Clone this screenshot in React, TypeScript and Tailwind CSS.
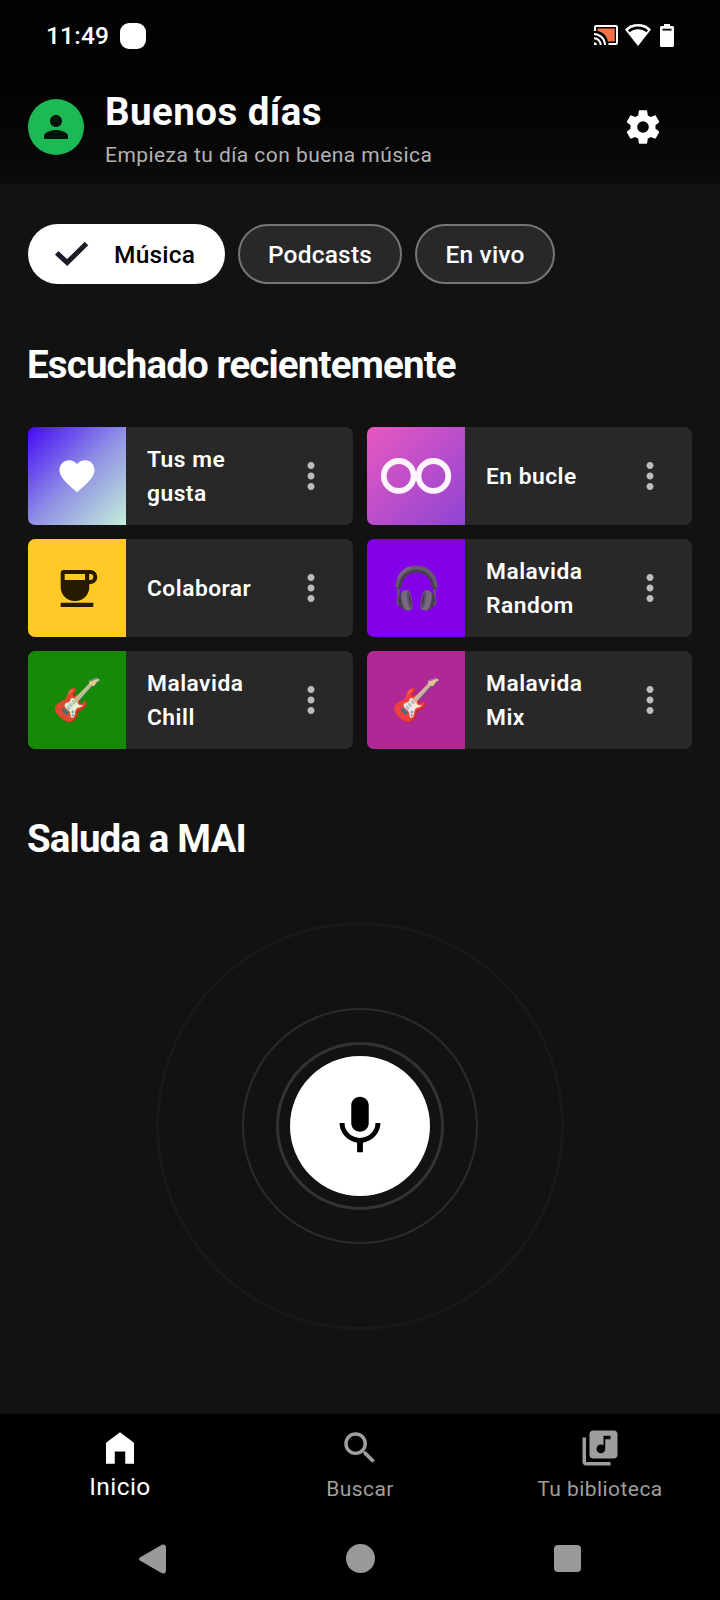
import type { ReactNode } from "react";
import {
  MdFavorite,
  MdLibraryMusic,
  MdMic,
  MdMoreVert,
  MdPerson,
  MdSearch,
} from "react-icons/md";

type Mix = {
  title: string;
  cover: string;
  art: ReactNode;
};

const mixes: Mix[] = [
  {
    title: "Tus me gusta",
    cover: "bg-[linear-gradient(135deg,#450af5,#8e8ee5_50%,#c4efd9)]",
    art: <MdFavorite className="size-[42px] text-white" />,
  },
  {
    title: "En bucle",
    cover: "bg-[linear-gradient(135deg,#e858c0,#8e44d4)]",
    art: <LoopArt />,
  },
  { title: "Colaborar", cover: "bg-[#ffca28]", art: <CupArt /> },
  {
    title: "Malavida Random",
    cover: "bg-[#8400e7]",
    art: <EmojiArt emoji="🎧" />,
  },
  {
    title: "Malavida Chill",
    cover: "bg-[#168a08]",
    art: <EmojiArt emoji="🎸" />,
  },
  {
    title: "Malavida Mix",
    cover: "bg-[#af2896]",
    art: <EmojiArt emoji="🎸" />,
  },
];

export default function App() {
  return (
    <div className="flex h-[1600px] w-[720px] flex-col overflow-hidden bg-[#121212] font-['Roboto',sans-serif] text-white">
      <header className="h-[184px] shrink-0 bg-linear-to-b from-[#030303] from-50% to-[#0b0b0b]">
        <StatusBar />
        <div className="flex h-[114px] items-center pr-[57px] pl-7">
          <div className="flex size-14 items-center justify-center rounded-full bg-[#1db954]">
            <MdPerson className="size-9 text-[#04140a]" />
          </div>
          <div className="ml-[21px] flex-1 pt-1">
            <h1 className="mt-[2px] text-[38.5px] leading-[48px] font-bold tracking-[0.45px]">
              Buenos días
            </h1>
            <p className="mt-[2px] text-[21px] leading-[34px] tracking-[0.44px] text-[#b3b3b3]">
              Empieza tu día con buena música
            </p>
          </div>
          <svg className="size-10" viewBox="0 0 24 24" fill="currentColor">
            <path d="M12 15.5A3.5 3.5 0 0 1 8.5 12 3.5 3.5 0 0 1 12 8.5a3.5 3.5 0 0 1 3.5 3.5 3.5 3.5 0 0 1-3.5 3.5m7.43-2.53c.04-.32.07-.64.07-.97 0-.33-.03-.66-.07-1l2.11-1.63c.19-.15.24-.42.12-.64l-2-3.46c-.12-.22-.39-.31-.61-.22l-2.49 1c-.52-.39-1.06-.73-1.69-.98l-.37-2.65A.506.506 0 0 0 14 2h-4c-.25 0-.46.18-.5.42l-.37 2.65c-.63.25-1.17.59-1.69.98l-2.49-1c-.22-.09-.49 0-.61.22l-2 3.46c-.13.22-.07.49.12.64L4.57 11c-.04.34-.07.67-.07 1 0 .33.03.65.07.97l-2.11 1.66c-.19.15-.25.42-.12.64l2 3.46c.12.22.39.3.61.22l2.49-1.01c.52.4 1.06.74 1.69.99l.37 2.65c.04.24.25.42.5.42h4c.25 0 .46-.18.5-.42l.37-2.65c.63-.26 1.17-.59 1.69-.99l2.49 1.01c.22.08.49 0 .61-.22l2-3.46c.12-.22.07-.49-.12-.64z" />
          </svg>
        </div>
      </header>

      <main className="flex-1 px-7">
        {/* Filters */}
        <div className="mt-10 flex gap-[13px]">
          <div className="flex h-[60px] w-[197px] items-center rounded-full bg-white pl-[26px] text-[24.5px] font-medium tracking-[0.2px] text-black">
            <svg className="h-7 w-9" viewBox="0 0 36 28" fill="none">
              <path
                d="M2.7 12.8 13.2 22.6 32.5 3.4"
                stroke="#1d1b26"
                strokeWidth="5"
              />
            </svg>
            <span className="mt-[2px] ml-6">Música</span>
          </div>
          <Chip className="w-[164px]" label="Podcasts" />
          <Chip className="w-[140px]" label="En vivo" />
        </div>

        <SectionTitle className="mt-[57px]">Escuchado recientemente</SectionTitle>

        <div className="mt-[38px] grid grid-cols-2 gap-[14px]">
          {mixes.map((m) => (
            <div
              key={m.title}
              className="flex h-[98px] items-center overflow-hidden rounded-[7px] bg-[#282828]"
            >
              <div
                className={`flex size-[98px] shrink-0 items-center justify-center ${m.cover}`}
              >
                {m.art}
              </div>
              <span className="mt-[2px] ml-[21px] w-[120px] flex-1 text-[22.75px] leading-[34px] font-semibold tracking-[0.5px]">
                {m.title}
              </span>
              <MdMoreVert className="mr-[21px] ml-5 size-[42px] shrink-0 text-[#bdbdbd]" />
            </div>
          ))}
        </div>

        <SectionTitle className="mt-[66px]">Saluda a MAI</SectionTitle>

        {/* Voice assistant button and its pulse rings */}
        <div className="mt-[59px] flex justify-center">
          <div className="flex size-[408px] items-center justify-center rounded-full border-3 border-[#191919]">
            <div className="flex size-[236px] items-center justify-center rounded-full border-2 border-[#2b2b2b]">
              <div className="flex size-[168px] items-center justify-center rounded-full border-3 border-[#333]">
                <div className="flex size-[140px] items-center justify-center rounded-full bg-white">
                  <MdMic className="size-[70px] text-black" />
                </div>
              </div>
            </div>
          </div>
        </div>
      </main>

      <footer className="h-[186px] shrink-0 bg-black">
        <nav className="grid h-[100px] grid-cols-3 text-[#9e9e9e]">
          <Tab
            icon={
              <svg className="size-[42px]" viewBox="0 0 24 24" fill="currentColor">
                <path d="M12 3 4 9v12h5v-7h6v7h5V9z" />
              </svg>
            }
            label="Inicio"
            active
          />
          <Tab icon={<MdSearch className="size-[42px]" />} label="Buscar" />
          <Tab
            icon={<MdLibraryMusic className="size-[42px]" />}
            label="Tu biblioteca"
          />
        </nav>
        <SystemNav />
      </footer>
    </div>
  );
}

function StatusBar() {
  return (
    <div className="flex h-[70px] items-center pr-[46px] pl-[46px]">
      <span className="mt-[2px] text-[24.5px] leading-[68px] font-medium tracking-[0.2px]">
        11:49
      </span>
      <span className="mt-px ml-[11px] size-[26px] rounded-[9px] bg-white" />
      <svg className="ml-auto h-5 w-6" viewBox="0 0 24 20" fill="none">
        <path
          d="M1 6V2.2C1 1.5 1.5 1 2.2 1h19.6c.7 0 1.2.5 1.2 1.2v15.6c0 .7-.5 1.2-1.2 1.2H14.5"
          stroke="#fff"
          strokeWidth="2"
        />
        <path d="M3.5 3.5h17.2v13H14C13 11 9 7 3.5 6z" fill="#f4724a" />
        <path d="M0 17.2A2.8 2.8 0 0 1 2.8 20H0z" fill="#fff" />
        <path
          d="M0 13.3A6.7 6.7 0 0 1 6.7 20M0 9A11 11 0 0 1 11 20"
          stroke="#fff"
          strokeWidth="1.9"
        />
      </svg>
      <svg className="ml-[7px] h-[22px] w-[26px]" viewBox="0 0 26 22">
        <path d="M13 22 0 5.5C7-1.8 19-1.8 26 5.5z" fill="#fff" />
        <path
          d="M3.8 7.3C9 2.7 17 2.7 22.2 7.3"
          stroke="#000"
          strokeWidth="2.6"
          fill="none"
        />
      </svg>
      <svg className="ml-[9px] h-[23px] w-[14px]" viewBox="0 0 14 23">
        <path
          d="M4 0h6v2h2.5c.8 0 1.5.7 1.5 1.5v18c0 .8-.7 1.5-1.5 1.5h-11C.7 23 0 22.3 0 21.5v-18C0 2.7.7 2 1.5 2H4z"
          fill="#fff"
        />
        <path d="M2.5 4.7h9v1.9h-9z" fill="#111" />
      </svg>
    </div>
  );
}

function Chip({ label, className }: { label: string; className: string }) {
  return (
    <div
      className={`flex h-[60px] items-center justify-center rounded-full border-2 border-[#76757a] bg-[#282828] pt-[2px] text-[24.5px] font-medium tracking-[0.2px] ${className}`}
    >
      {label}
    </div>
  );
}

function SectionTitle({
  children,
  className,
}: {
  children: ReactNode;
  className: string;
}) {
  return (
    <h2
      className={`-ml-px text-[38.5px] leading-[48px] font-bold tracking-[-0.87px] ${className}`}
    >
      {children}
    </h2>
  );
}

function Tab({
  icon,
  label,
  active,
}: {
  icon: ReactNode;
  label: string;
  active?: boolean;
}) {
  return (
    <div
      className={`flex flex-col items-center pt-[13px] ${active ? "text-white" : ""}`}
    >
      {icon}
      <span
        className={
          active
            ? "mt-px text-[24.5px] leading-[34px] tracking-[0.45px]"
            : "mt-[3px] text-[21px] leading-[34px] tracking-[0.44px]"
        }
      >
        {label}
      </span>
    </div>
  );
}

// Android back / home / recents
function SystemNav() {
  return (
    <div className="flex h-[89px] items-center justify-between pr-[139px] pl-[139px] text-[#999]">
      <svg className="h-[30px] w-[27px]" viewBox="0 0 27 30" fill="currentColor">
        <path d="M1.2 13.2 22.5.9C24.8-.3 27 .8 27 3.5v23c0 2.7-2.2 3.8-4.5 2.6L1.2 16.8c-1.6-.9-1.6-2.7 0-3.6z" />
      </svg>
      <span className="size-[29px] rounded-full bg-current" />
      <span className="size-[27px] rounded-[4px] bg-current" />
    </div>
  );
}

function EmojiArt({ emoji }: { emoji: string }) {
  return (
    <span className="mt-px text-[41px] leading-none opacity-90">{emoji}</span>
  );
}

function LoopArt() {
  return (
    <svg className="size-[98px]" viewBox="0 0 98 98" fill="none">
      <g stroke="#fff3fd" strokeWidth="5.8">
        <circle cx="31.7" cy="48.9" r="14.9" />
        <circle cx="66.4" cy="48.9" r="14.9" />
      </g>
    </svg>
  );
}

function CupArt() {
  return (
    <svg className="size-[98px]" viewBox="0 0 98 98" fill="#261a00">
      <path
        fillRule="evenodd"
        d="M35.7 31H62.3a7 7 0 0 1 0 14H61.3v3a14 14 0 0 1-14 14h-.6a14 14 0 0 1-14-14V34a3 3 0 0 1 3-3zM36.7 35v6H57v-6zM61.2 35v6h1.1a3 3 0 0 0 0-6z"
      />
      <path d="M32.7 63.7h32.6V68H32.7z" />
    </svg>
  );
}
